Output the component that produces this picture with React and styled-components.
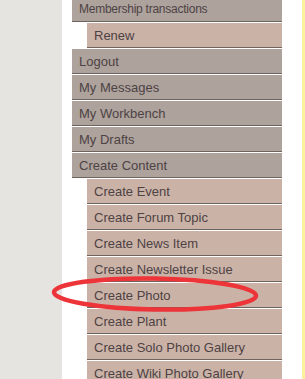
import React from 'react'
import styled, { createGlobalStyle } from 'styled-components'

const Global = createGlobalStyle`
  html, body { margin: 0; padding: 0; background: #fff; }
  body { font-family: "Liberation Sans", Arial, sans-serif; }
`

const Page = styled.div`
  position: relative;
  display: flex;
  width: 305px;
  height: 379px;
  overflow: hidden;
  background: #fff;
`

const LeftPanel = styled.div`
  width: 62px;
  flex-shrink: 0;
  background: #e5e4e0;
`

const Main = styled.div`
  flex: 1;
  padding-left: 10px;
`

const Menu = styled.ul`
  list-style: none;
  margin: -3px 0 0 0;
  padding: 0;
  width: 210px;
`

const Item = styled.li`
  height: 23px;
  padding-top: 1px;
  line-height: 23px;
  margin-left: ${p => (p.$sub ? '15px' : '0')};
  margin-bottom: 1px;
  padding-left: 7px;
  border-bottom: 1px solid #6f635e;
  background: ${p => (p.$sub ? '#cbb2a7' : '#ada29c')};
  color: #4d4244;
  font-size: ${p => (p.$small ? '12px' : '13px')};
  letter-spacing: ${p => (p.$small ? '-0.25px' : '0')};
  white-space: nowrap;
`

const Strip = styled.div`
  width: 3px;
  flex-shrink: 0;
  background: #fcf29b;
`

const Circle = styled.svg`
  position: absolute;
  left: 0;
  top: 0;
  pointer-events: none;
`

const items = [
  { label: 'Membership transactions', small: true },
  { label: 'Renew', sub: true },
  { label: 'Logout' },
  { label: 'My Messages' },
  { label: 'My Workbench' },
  { label: 'My Drafts' },
  { label: 'Create Content' },
  { label: 'Create Event', sub: true },
  { label: 'Create Forum Topic', sub: true },
  { label: 'Create News Item', sub: true },
  { label: 'Create Newsletter Issue', sub: true },
  { label: 'Create Photo', sub: true },
  { label: 'Create Plant', sub: true },
  { label: 'Create Solo Photo Gallery', sub: true },
  { label: 'Create Wiki Photo Gallery', sub: true },
]

export default function App() {
  return (
    <>
      <Global />
      <Page>
        <LeftPanel />
        <Main>
          <Menu>
            {items.map(it => (
              <Item key={it.label} $sub={it.sub} $small={it.small}>
                {it.label}
              </Item>
            ))}
          </Menu>
        </Main>
        <Strip />
        <Circle width="305" height="379" viewBox="0 0 305 379">
          <ellipse
            cx="155"
            cy="294"
            rx="101"
            ry="15.5"
            transform="rotate(1 155 294)"
            fill="none"
            stroke="#ec3439"
            strokeWidth="4.5"
          />
        </Circle>
      </Page>
    </>
  )
}
